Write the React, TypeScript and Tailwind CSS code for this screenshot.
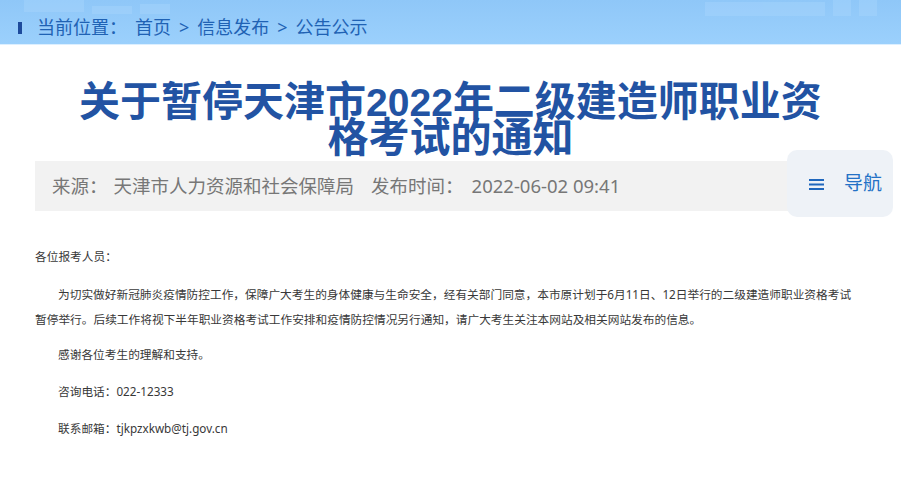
import React from "react";

const sans = {
  fontFamily: '"Noto Sans", "Noto Sans CJK SC", sans-serif',
};

const cjk = {
  fontFamily: '"Noto Sans CJK SC", sans-serif',
};

const digits = {
  fontFamily: '"Liberation Sans", Arial, sans-serif',
};

function Breadcrumb() {
  return (
    <div className="relative h-[45px] bg-gradient-to-b from-[#8fc7f8] to-[#9bd0fc] border-b border-[#dcefff]">
      {/* faint skyline texture */}
      <div className="absolute left-0 top-0 flex h-[18px] w-full gap-2 px-6 opacity-30">
        <div className="h-[12px] w-[60px] bg-[#b3dcff]" />
        <div className="mt-[6px] h-[8px] w-[40px] bg-[#b3dcff]" />
        <div className="mt-[4px] h-[10px] w-[30px] bg-[#b3dcff]" />
        <div className="ml-auto mt-[2px] h-[14px] w-[120px] bg-[#b3dcff]" />
        <div className="h-[16px] w-[18px] bg-[#b3dcff]" />
        <div className="h-[16px] w-[18px] bg-[#b3dcff]" />
      </div>
      <div className="relative flex h-full items-center pl-[18px] pt-[11px] text-[18px] text-[#1f62b4]">
        <span className="mr-[15px] h-[12px] w-[4px] bg-[#1d4a9c]" />
        <span>当前位置：</span>
        <span className="ml-[8px]">首页</span>
        <span className="mx-[8px]">&gt;</span>
        <span>信息发布</span>
        <span className="mx-[8px]">&gt;</span>
        <span>公告公示</span>
      </div>
    </div>
  );
}

function NavButton() {
  return (
    <div className="absolute right-[8px] top-[150px] flex h-[67px] w-[106px] items-center rounded-[10px] bg-[#eef2f7] pl-[22px] text-[#2371c6]">
      <svg width="16" height="14" viewBox="0 0 16 14" className="mr-[19px] mt-[1px]">
        <rect x="0" y="2" width="15" height="2" fill="#1f67bd" />
        <rect x="0" y="6.5" width="15" height="2" fill="#1f67bd" />
        <rect x="0" y="11" width="15" height="2" fill="#1f67bd" />
      </svg>
      <span className="text-[19px]">导航</span>
    </div>
  );
}

export default function App() {
  return (
    <div className="relative min-h-[494px] w-[901px] bg-white" style={sans}>
      <Breadcrumb />
      <div className="px-[35px]">
        <h1
          className="mt-[35px] px-[32px] text-center text-[41px] font-bold leading-[36px] text-[#2253a3]"
          style={cjk}
        >
          关于暂停天津市
          <span className="text-[39px] leading-[0px]" style={digits}>
            2022
          </span>
          年二级建造师职业资格考试的通知
        </h1>
        <div className="mt-[9px] flex h-[50px] items-center bg-[#f2f2f2] pl-[17px] text-[18.5px] text-[#777777]">
          <span>来源：</span>
          <span className="ml-[6px]">天津市人力资源和社会保障局</span>
          <span className="ml-[17px]">发布时间：</span>
          <span className="ml-[8px]">2022-06-02 09:41</span>
        </div>
        <div className="mt-[33px] pr-[12px] text-[11.7px] leading-[25px] text-[#383838]">
          <p>各位报考人员：</p>
          <p className="mt-[13px] indent-[23px]">
            为切实做好新冠肺炎疫情防控工作，保障广大考生的身体健康与生命安全，经有关部门同意，本市原计划于6月11日、12日举行的二级建造师职业资格考试暂停举行。后续工作将视下半年职业资格考试工作安排和疫情防控情况另行通知，请广大考生关注本网站及相关网站发布的信息。
          </p>
          <p className="mt-[10px] indent-[23px]">感谢各位考生的理解和支持。</p>
          <p className="mt-[12px] indent-[23px]">咨询电话：022-12333</p>
          <p className="mt-[12px] indent-[23px]">联系邮箱：tjkpzxkwb@tj.gov.cn</p>
        </div>
      </div>
      <NavButton />
    </div>
  );
}
